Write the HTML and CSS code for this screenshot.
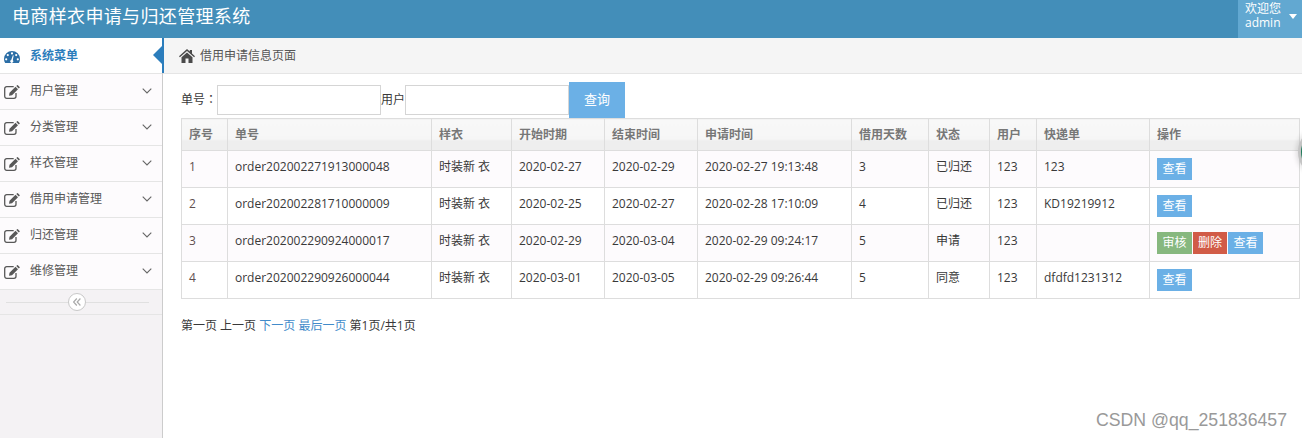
FILE: index.html
```html
<!DOCTYPE html>
<html lang="zh-CN">
<head>
    <meta charset="UTF-8">
    <title>电商样衣申请与归还管理系统</title>
    <link rel="stylesheet" href="styles.css">
</head>
<body>

<svg class="icon-defs" width="0" height="0">
    <symbol id="i-edit" viewBox="0 0 16 14">
        <path d="M12 8v3.300a2 2 0 0 1-2 2H2.700a2 2 0 0 1-2-2V3.700a2 2 0 0 1 2-2h7" fill="none" stroke="currentColor" stroke-width="1.300"/>
        <path d="M5 10.800l.5-3 6-6 2.500 2.500-6 6z M12.300 1l.8-.8a.6.6 0 0 1 .8 0l1.700 1.700a.6.6 0 0 1 0 .8l-.8.8z" fill="currentColor"/>
    </symbol>
    <symbol id="i-chevron" viewBox="0 0 10 6">
        <path d="M.7.7L5 5l4.300-4.300" fill="none" stroke="currentColor" stroke-width="1.100"/>
    </symbol>
</svg>

<header class="navbar">
    <div class="brand">电商样衣申请与归还管理系统</div>
    <div class="user-menu">
        <div class="user-text">欢迎您<br>admin</div>
        <span class="caret"></span>
    </div>
</header>

<div class="main">
    <aside class="sidebar">
        <div class="menu-title">
            <svg class="menu-icon dash" viewBox="0 0 16 12" width="16" height="12">
                <path fill-rule="evenodd" d="M8 0a8 8 0 0 0-8 8c0 1.600.4 2.900 1.200 4h13.600c.8-1.100 1.200-2.400 1.200-4a8 8 0 0 0-8-8zM8 1.300a1.100 1.100 0 1 1 0 2.200 1.100 1.100 0 0 1 0-2.200zM3.800 3a1.100 1.100 0 1 1 0 2.200 1.100 1.100 0 0 1 0-2.200zM12.200 3a1.100 1.100 0 1 1 0 2.200 1.100 1.100 0 0 1 0-2.200zM2.200 7.200a1.100 1.100 0 1 1 0 2.200 1.100 1.100 0 0 1 0-2.200zM13.800 7.200a1.100 1.100 0 1 1 0 2.200 1.100 1.100 0 0 1 0-2.200zM8.900 4.200l.8.200-.9 4.800a1.500 1.500 0 1 1-1.600-.3z" fill="currentColor"/>
            </svg>
            <span>系统菜单</span>
        </div>
        <ul class="menu">
            <li><svg class="menu-icon"><use href="#i-edit"/></svg><span>用户管理</span><svg class="chevron"><use href="#i-chevron"/></svg></li>
            <li><svg class="menu-icon"><use href="#i-edit"/></svg><span>分类管理</span><svg class="chevron"><use href="#i-chevron"/></svg></li>
            <li><svg class="menu-icon"><use href="#i-edit"/></svg><span>样衣管理</span><svg class="chevron"><use href="#i-chevron"/></svg></li>
            <li><svg class="menu-icon"><use href="#i-edit"/></svg><span>借用申请管理</span><svg class="chevron"><use href="#i-chevron"/></svg></li>
            <li><svg class="menu-icon"><use href="#i-edit"/></svg><span>归还管理</span><svg class="chevron"><use href="#i-chevron"/></svg></li>
            <li><svg class="menu-icon"><use href="#i-edit"/></svg><span>维修管理</span><svg class="chevron"><use href="#i-chevron"/></svg></li>
        </ul>
        <div class="collapse-bar">
            <span class="collapse-btn">
                <svg viewBox="0 0 8 8" width="8" height="8">
                    <path d="M3.800.5L.6 4l3.200 3.500M7.400.5L4.200 4l3.200 3.500" fill="none" stroke="currentColor" stroke-width="1.200"/>
                </svg>
            </span>
        </div>
    </aside>

    <section class="content">
        <div class="breadcrumb">
            <svg class="home-icon" viewBox="0 0 16 14" width="16" height="14">
                <path d="M8 0l2.800 2.500V1h2.200v3.500L16 7.200l-.9 1L8 2 .9 8.200 0 7.200z M8 3.500l5.500 4.800V14H9.500V9.500h-3V14h-4V8.300z" fill="currentColor"/>
            </svg>
            <span>借用申请信息页面</span>
        </div>

        <div class="page-body">
            <form class="search-form">
                <label>单号<span class="colon" lang="zh-TW">：</span></label><input type="text" class="search-input"><label>用户</label><input type="text" class="search-input"><button type="button" class="search-btn">查询</button>
            </form>

            <table class="data-table">
                <colgroup>
                    <col class="c-no"><col class="c-order"><col class="c-cloth"><col class="c-date"><col class="c-date">
                    <col class="c-time"><col class="c-days"><col class="c-state"><col class="c-user"><col class="c-ship"><col class="c-op">
                </colgroup>
                <thead>
                    <tr><th>序号</th><th>单号</th><th>样衣</th><th>开始时期</th><th>结束时间</th><th>申请时间</th><th>借用天数</th><th>状态</th><th>用户</th><th>快递单</th><th>操作</th></tr>
                </thead>
                <tbody>
                    <tr class="odd">
                        <td class="num">1</td><td>order202002271913000048</td><td>时装新 衣</td><td>2020-02-27</td><td>2020-02-29</td><td>2020-02-27 19:13:48</td><td>3</td><td>已归还</td><td>123</td><td>123</td>
                        <td><a class="btn blue">查看</a></td>
                    </tr>
                    <tr>
                        <td class="num">2</td><td>order202002281710000009</td><td>时装新 衣</td><td>2020-02-25</td><td>2020-02-27</td><td>2020-02-28 17:10:09</td><td>4</td><td>已归还</td><td>123</td><td>KD19219912</td>
                        <td><a class="btn blue">查看</a></td>
                    </tr>
                    <tr class="odd">
                        <td class="num">3</td><td>order202002290924000017</td><td>时装新 衣</td><td>2020-02-29</td><td>2020-03-04</td><td>2020-02-29 09:24:17</td><td>5</td><td>申请</td><td>123</td><td></td>
                        <td><a class="btn green">审核</a><a class="btn red">删除</a><a class="btn blue">查看</a></td>
                    </tr>
                    <tr>
                        <td class="num">4</td><td>order202002290926000044</td><td>时装新 衣</td><td>2020-03-01</td><td>2020-03-05</td><td>2020-02-29 09:26:44</td><td>5</td><td>同意</td><td>123</td><td>dfdfd1231312</td>
                        <td><a class="btn blue">查看</a></td>
                    </tr>
                </tbody>
            </table>

            <p class="pager">第一页 上一页 <a>下一页</a> <a>最后一页</a> 第1页/共1页</p>
        </div>
    </section>
</div>

<div class="edge-ball"></div>
<div class="watermark">CSDN @qq_251836457</div>

</body>
</html>
```

FILE: styles.css
```css
/* General */
* {
    box-sizing: border-box;
}

html, body {
    height: 100%;
}

body {
    margin: 0;
    overflow: hidden;
    position: relative;
    font-family: "Open Sans", "Noto Sans CJK SC", sans-serif;
    font-size: 12px;
    line-height: 1.5;
    color: #393939;
    background-color: #fff;
}

.icon-defs {
    position: absolute;
}

/* Navbar */
.navbar {
    display: flex;
    justify-content: space-between;
    height: 38px;
    background-color: #438eb9;
    color: #fff;
}

.brand {
    padding-left: 12px;
    font-size: 18px;
    letter-spacing: 0.35px;
    line-height: 33px;
}

.user-menu {
    display: flex;
    align-items: flex-start;
    width: 64px;
    padding: 2px 0 0 7px;
    background-color: #62a8d1;
}

.user-text {
    font-size: 12px;
    line-height: 14px;
}

.caret {
    margin: 12px 0 0 8px;
    border-top: 5px solid #fff;
    border-left: 4px solid transparent;
    border-right: 4px solid transparent;
}

/* Sidebar */
.main {
    display: flex;
    height: 400px;
}

.sidebar {
    flex: none;
    width: 163px;
    background-color: #f4f2f4;
    border-right: 1px solid #cccccc;
}

.menu-title {
    position: relative;
    display: flex;
    align-items: center;
    height: 36px;
    padding-left: 4px;
    background-color: #fff;
    border-bottom: 1px solid #e5e5e5;
    color: #2b7dbc;
    font-weight: 600;
}

.menu-title::before {
    content: "";
    position: absolute;
    top: 0;
    right: -2px;
    width: 2px;
    height: 35px;
    background-color: #2b7dbc;
}

.menu-title::after {
    content: "";
    position: absolute;
    top: 8px;
    right: 0;
    border-top: 9px solid transparent;
    border-bottom: 9px solid transparent;
    border-right: 9px solid #2b7dbc;
}

.menu-icon {
    flex: none;
    width: 16px;
    height: 14px;
    margin-right: 10px;
}

.menu-title .dash {
    height: 12px;
    margin-top: 2px;
    color: #2b6ea6;
}

.menu {
    margin: 0;
    padding: 0;
    list-style: none;
}

.menu li {
    display: flex;
    align-items: center;
    height: 36px;
    padding-left: 4px;
    background-color: #fdfbfd;
    border-bottom: 1px solid #e5e5e5;
    color: #585858;
}

.menu li span {
    flex: 1;
    margin-top: -2px;
}

.chevron {
    width: 10px;
    height: 6px;
    margin-right: 10px;
    margin-top: -2px;
    color: #666;
}

.collapse-bar {
    position: relative;
    height: 25px;
    border-bottom: 1px solid #e5e5e5;
    display: flex;
    justify-content: center;
    align-items: center;
}

.collapse-bar::before {
    content: "";
    position: absolute;
    left: 6px;
    right: 13px;
    top: 12px;
    border-top: 1px solid #e0e0e0;
}

.collapse-btn {
    position: relative;
    left: -4px;
    display: flex;
    align-items: center;
    justify-content: center;
    width: 18px;
    height: 18px;
    border: 1px solid #c8c8c8;
    border-radius: 50%;
    background-color: #fff;
    color: #aaa;
}

/* Content */
.content {
    flex: 1;
    min-width: 0;
}

.breadcrumb {
    display: flex;
    align-items: center;
    height: 36px;
    padding-left: 16px;
    background-color: #f5f5f5;
    border-bottom: 1px solid #e5e5e5;
    color: #555;
}

.home-icon {
    margin-right: 5px;
    color: #4a4a4a;
}

.page-body {
    padding: 8px 3px 0 18px;
}

.search-form {
    display: flex;
    align-items: center;
    height: 36px;
}

.search-form label {
    margin-top: -1px;
}

.colon {
    font-family: "Noto Sans CJK TC", sans-serif;
}

.search-input {
    width: 164px;
    height: 30px;
    padding: 0 4px;
    border: 1px solid #d5d5d5;
    background-color: #fff;
}

.search-btn {
    width: 56px;
    height: 36px;
    padding: 0;
    border: none;
    background-color: #6bb0e6;
    color: #fff;
    font: inherit;
    font-size: 13px;
}

/* Table */
.data-table {
    width: 1118px;
    table-layout: fixed;
    border-collapse: collapse;
}

.c-no { width: 46px; }
.c-order { width: 204px; }
.c-cloth { width: 80px; }
.c-date { width: 93px; }
.c-time { width: 154px; }
.c-days { width: 77px; }
.c-state { width: 61px; }
.c-user { width: 47px; }
.c-ship { width: 113px; }
.c-op { width: 150px; }

.data-table th,
.data-table td {
    border: 1px solid #dddddd;
    padding: 0 7px;
    text-align: left;
    white-space: nowrap;
}

.data-table th {
    height: 32px;
    font-weight: 600;
    color: #777777;
    background: linear-gradient(#f8f8f8 0, #f6f6f6 20px, #eeeeee 21px, #eeeeee 100%);
}

.data-table td {
    height: 37px;
    padding-bottom: 5px;
}

.data-table tr.odd td {
    background-color: #fdfbfd;
}

.data-table td.num {
    color: #5f5050;
}

.btn {
    display: inline-block;
    height: 22px;
    width: 35px;
    margin-right: 1px;
    margin-top: 4px;
    color: #fff;
    font-size: 12px;
    line-height: 22px;
    text-align: center;
    vertical-align: top;
}

.btn.blue { background-color: #6bb0e6; }
.btn.green { background-color: #87b87f; }
.btn.red { background-color: #d15b47; width: 34px; }

/* Pager */
.pager {
    margin: 18px 0 0;
    color: #393939;
}

.pager a {
    color: #428bca;
}

/* Extras */
.edge-ball {
    position: absolute;
    top: 127px;
    left: 1298px;
    width: 50px;
    height: 50px;
    border-radius: 50%;
    background-color: #1e7a5a;
    border: 3px solid #c4c4c4;
    box-shadow: -2px 0 5px rgba(0, 0, 0, 0.12);
}

.watermark {
    position: absolute;
    right: 15px;
    bottom: 8px;
    font-family: "Liberation Sans", sans-serif;
    font-size: 17.7px;
    line-height: 20px;
    color: #999999;
}
```
